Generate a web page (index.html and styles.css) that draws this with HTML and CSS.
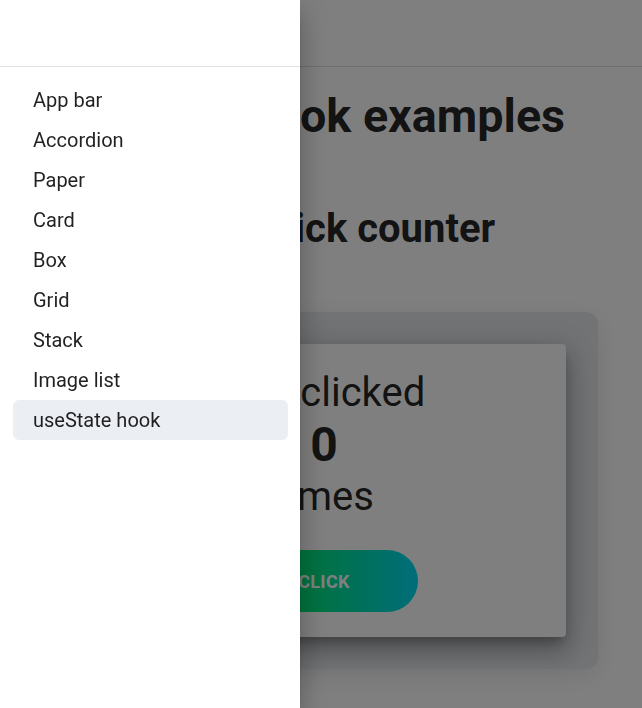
FILE: index.html
```html
<!DOCTYPE html>
<html lang="en">
<head>
<meta charset="utf-8">
<title>useState hook examples</title>
<link rel="stylesheet" href="styles.css">
</head>
<body>
<div class="page">
  <header class="appbar"></header>
  <main class="content">
    <h1 class="title">useState hook examples</h1>
    <h2 class="subtitle">Example 1: Click counter</h2>
    <section class="paper">
      <div class="card">
        <p class="line">You clicked</p>
        <p class="count">0</p>
        <p class="line">times</p>
        <button class="click-btn" type="button">Click</button>
      </div>
    </section>
  </main>
</div>

<div class="backdrop"></div>
<nav class="drawer">
  <div class="drawer-head"></div>
  <ul class="nav-list">
    <li class="nav-item">App bar</li>
    <li class="nav-item">Accordion</li>
    <li class="nav-item">Paper</li>
    <li class="nav-item">Card</li>
    <li class="nav-item">Box</li>
    <li class="nav-item">Grid</li>
    <li class="nav-item">Stack</li>
    <li class="nav-item">Image list</li>
    <li class="nav-item selected">useState hook</li>
  </ul>
</nav>
</body>
</html>
```

FILE: styles.css
```css
* { box-sizing: border-box; }

html, body {
  margin: 0;
  padding: 0;
  height: 100%;
  overflow: hidden;
}

body {
  font-family: Roboto, "Liberation Sans", Arial, sans-serif;
  color: rgba(0, 0, 0, 0.87);
  background: #ffffff;
}

.appbar {
  height: 67px;
  border-bottom: 1px solid #e0e0e0;
  background: #ffffff;
}

.content {
  padding: 21px 44px 0 50px;
}

.title {
  margin: 0;
  font-size: 46.7px;
  line-height: 56px;
  font-weight: 700;
  letter-spacing: 0;
  white-space: nowrap;
}

.subtitle {
  margin: 61px 0 0 0;
  font-size: 40px;
  line-height: 48px;
  font-weight: 700;
  white-space: nowrap;
}

.paper {
  margin-top: 59px;
  background: #e4e6ea;
  border-radius: 12px;
  padding: 32px;
  box-shadow: 0 6px 24px rgba(0, 0, 0, 0.10);
}

.card {
  background: #ffffff;
  border-radius: 4px;
  padding: 25px 24px 25px;
  display: flex;
  flex-direction: column;
  align-items: center;
  box-shadow: 0px 8px 10px -4px rgba(0,0,0,0.24), 0px 14px 22px 2px rgba(0,0,0,0.18), 0px 6px 28px 5px rgba(0,0,0,0.14);
}

.line {
  margin: 0;
  font-size: 40px;
  line-height: 48px;
  font-weight: 400;
}

.count {
  margin: 0;
  font-size: 48px;
  line-height: 56px;
  font-weight: 700;
}

.click-btn {
  margin-top: 29px;
  width: 188px;
  height: 62px;
  border: 0;
  border-radius: 31px;
  background: linear-gradient(90deg, #00e676 38%, #00dcf0 98%);
  color: #ffffff;
  font-family: Roboto, "Liberation Sans", Arial, sans-serif;
  font-size: 18px;
  font-weight: 700;
  text-transform: uppercase;
  letter-spacing: 0.3px;
}

.backdrop {
  position: fixed;
  inset: 0;
  background: rgba(0, 0, 0, 0.5);
}

.drawer {
  position: fixed;
  top: 0;
  left: 0;
  bottom: 0;
  width: 300px;
  background: #ffffff;
  box-shadow: 0px 8px 10px -5px rgba(0,0,0,0.2), 0px 16px 24px 2px rgba(0,0,0,0.14), 0px 6px 30px 5px rgba(0,0,0,0.12);
}

.drawer-head {
  height: 67px;
  border-bottom: 1px solid #e0e0e0;
}

.nav-list {
  list-style: none;
  margin: 0;
  padding: 13px 12px 0 13px;
  display: flex;
  flex-direction: column;
}

.nav-item {
  height: 40px;
  display: flex;
  align-items: center;
  padding: 0 20px;
  border-radius: 6px;
  font-size: 20px;
  line-height: 24px;
  color: rgba(0, 0, 0, 0.87);
}

.nav-item.selected {
  background: #ebeef3;
}
```
